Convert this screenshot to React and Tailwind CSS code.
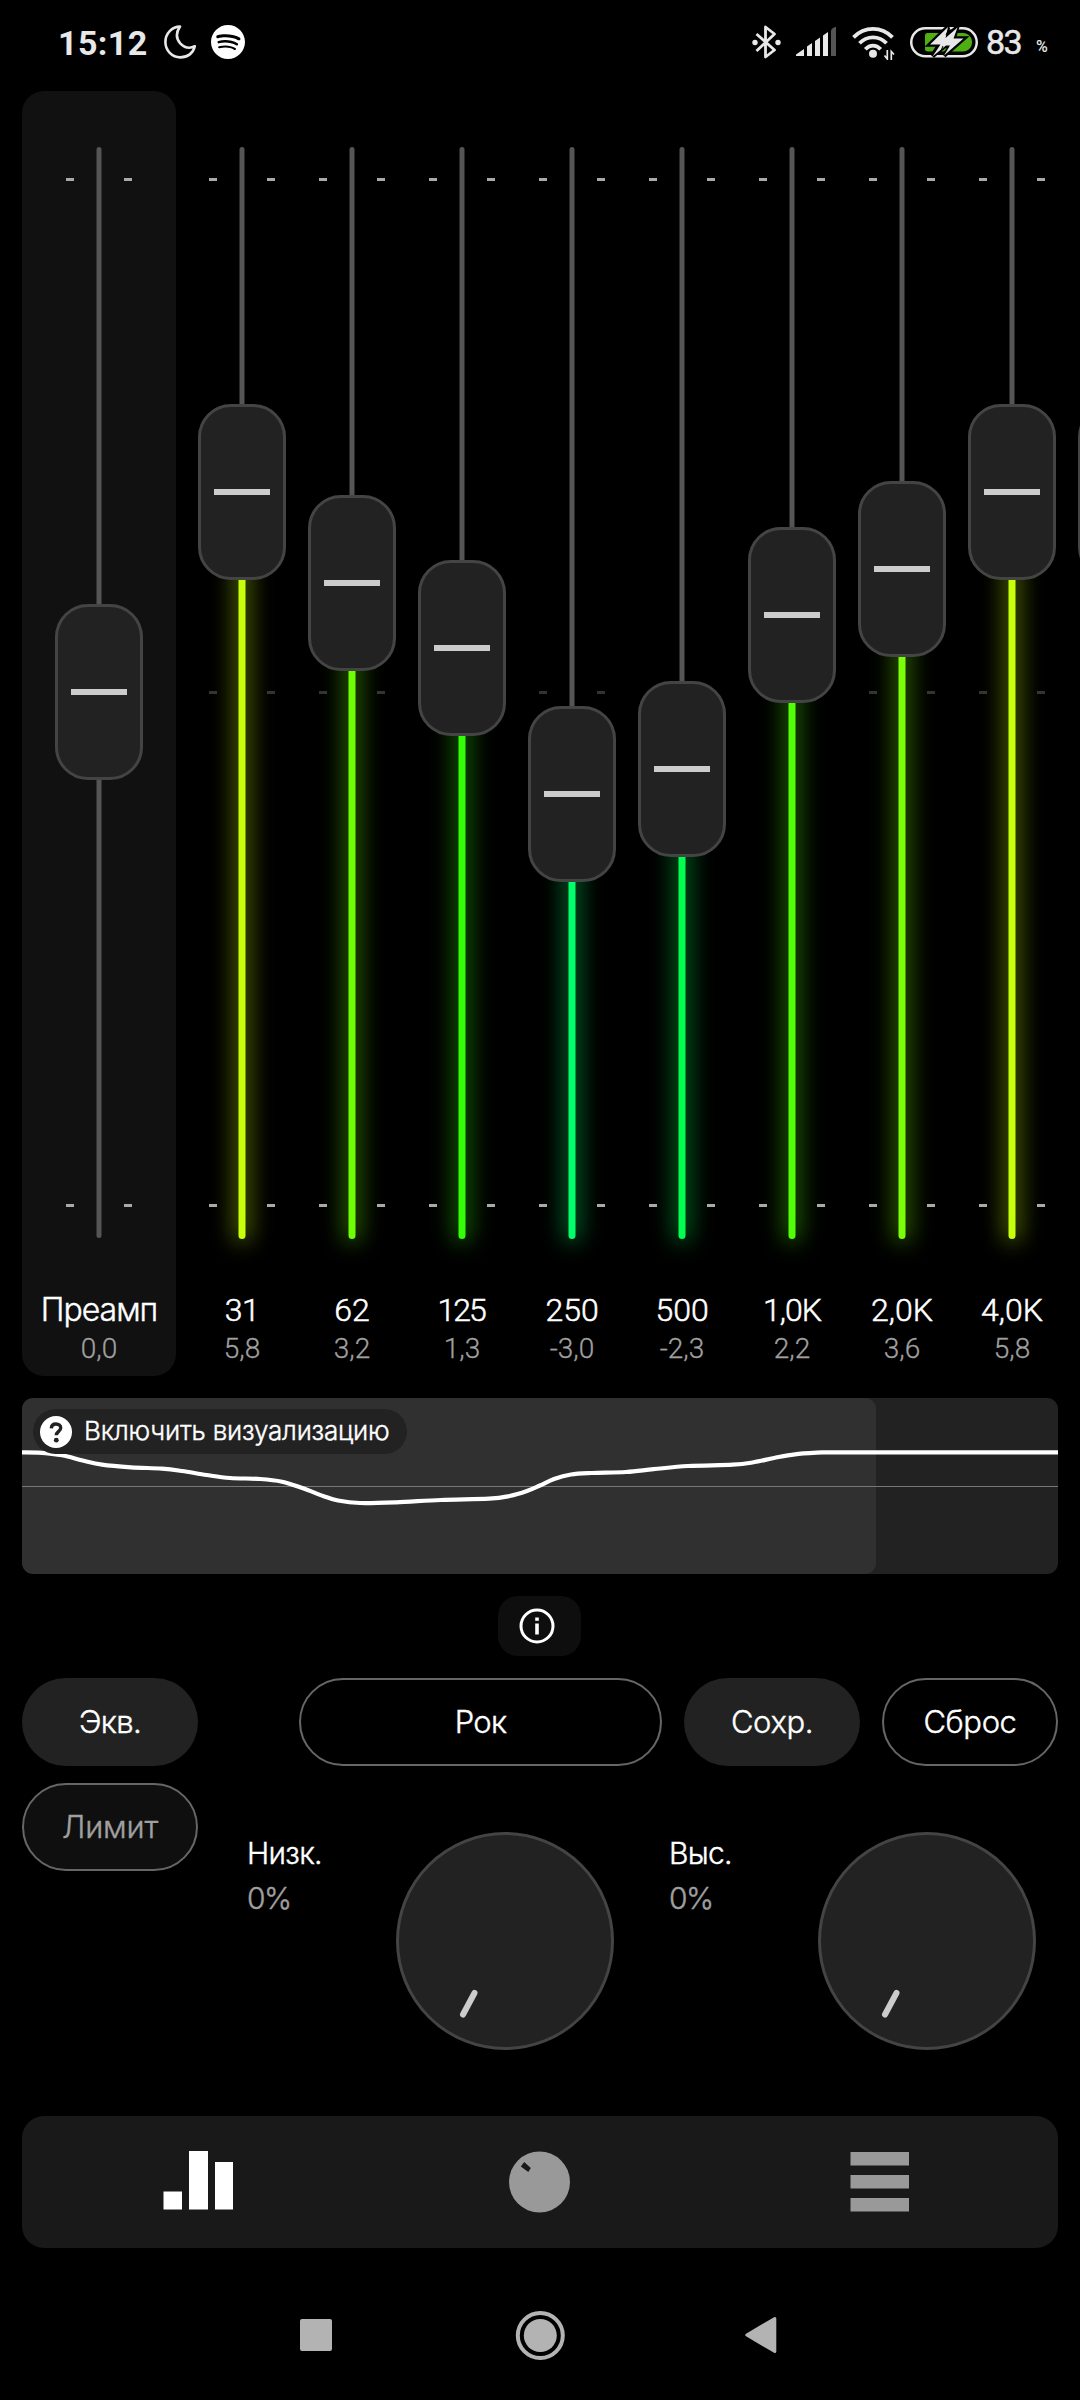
import React from 'react';
import { SiSpotify } from 'react-icons/si';

const bands = [
    { label: '31', value: '5,8', top: 257, color: '#c8ff0a', track: 'tracking-[-0.5px]' },
    { label: '62', value: '3,2', top: 348, color: '#6eff05', track: 'tracking-normal' },
    { label: '125', value: '1,3', top: 413, color: '#32ff08', track: 'tracking-[-2px] pr-0.5' },
    { label: '250', value: '-3,0', top: 559, color: '#00ff6a', track: 'tracking-normal' },
    { label: '500', value: '-2,3', top: 534, color: '#00ff50', track: 'tracking-normal' },
    { label: '1,0K', value: '2,2', top: 380, color: '#50ff08', track: 'tracking-[-1px]' },
    { label: '2,0K', value: '3,6', top: 334, color: '#7aff08', track: 'tracking-normal' },
    { label: '4,0K', value: '5,8', top: 257, color: '#c8ff0a', track: 'tracking-normal' },
    // next band only peeks in from the right edge
    { label: '', value: '', top: 257, color: '#c8ff0a', track: 'tracking-normal' },
];

const curvePoints = [
    [0, 54.3], [16, 54.7], [40, 57.3], [60.6, 62.5], [80, 66.7], [109, 69.3], [140, 70.7], [160, 73],
    [184.6, 77], [208, 80], [238, 81], [260, 83.7], [281, 90.3], [301.7, 98.2], [316, 102.5], [338, 105],
    [374, 104.3], [418.8, 102], [467, 100.7], [487.6, 98], [505, 93], [518, 87.5], [532, 81], [549, 76.5],
    [569.7, 75], [604, 74], [631.6, 71.2], [666, 68], [710.8, 66.7], [731.5, 64.3], [752, 60], [773, 56.3],
    [800, 54.4], [1036, 54.3],
];

// Catmull-Rom through the response points
const buildCurve = (pts) => {
    let d = `M${pts[0][0]} ${pts[0][1]}`;
    for (let i = 0; i < pts.length - 1; i++) {
        if (i === pts.length - 2) {
            d += ` L${pts[i + 1][0]} ${pts[i + 1][1]}`;
            continue;
        }
        const a = pts[i - 1] || pts[i];
        const b = pts[i];
        const c = pts[i + 1];
        const e = i + 3 < pts.length ? pts[i + 2] : c;
        d += ` C${b[0] + (c[0] - a[0]) / 6} ${b[1] + (c[1] - a[1]) / 6} ${c[0] - (e[0] - b[0]) / 6} ${c[1] - (e[1] - b[1]) / 6} ${c[0]} ${c[1]}`;
    }
    return d;
};

const TickRow = ({ dim }) => (
    <div className="flex h-[3px] w-[66px] justify-between">
        <div className={dim ? 'w-2 bg-[#333]' : 'w-2 bg-[#aaa]'} />
        <div className={dim ? 'w-2 bg-[#333]' : 'w-2 bg-[#aaa]'} />
    </div>
);

const Slider = ({ top, color }) => (
    <div className="relative mt-14 flex h-[1092px] w-full shrink-0 justify-center">
        <div className="h-[1091px] w-[5px] -translate-x-[0.5px] rounded-full bg-[#555]" />
        <div className="absolute inset-x-0 top-[31px] flex h-[1029px] flex-col items-center justify-between">
            <TickRow />
            <TickRow dim />
            <TickRow />
        </div>
        {color && (
            <div
                className="absolute bottom-0 w-[7px] -translate-x-[0.5px] rounded-full"
                style={{ top: top + 150, background: color, boxShadow: `0 0 22px 4px ${color}70` }}
            />
        )}
        <div
            className="absolute flex h-44 w-22 items-center justify-center rounded-[33px] border-3 border-[#444] bg-[#222]"
            style={{ top }}
        >
            <div className="h-1.5 w-14 bg-[#ccc]" />
        </div>
    </div>
);

const StatusBar = () => (
    <header className="flex h-[91px] shrink-0 items-start pt-[25px] pl-[58px] text-[#e8e8e8]">
        <div className="mt-px w-[106px] text-[34px] leading-[34px] font-bold tracking-[0.4px] whitespace-nowrap">15:12</div>
        <svg className="h-[34px] w-8" viewBox="0 0 32 34" fill="none" stroke="currentColor" strokeWidth="2.6" strokeLinejoin="round">
            <path d="M16 1.600C8 1.600 1.400 8.500 1.400 17S8 32.400 16.300 32.400C23.500 32.400 29.500 28 30.800 21.200C25.500 24 20 22.200 16.200 18.300C12 13.500 12 7.500 16 1.600Z" />
        </svg>
        <SiSpotify className="ml-[15px] size-[34px] text-white" />
        <svg className="ml-[507px] h-[34px] w-[30px]" viewBox="0 0 30 34" fill="none" stroke="currentColor" strokeWidth="2.8" strokeLinejoin="round">
            <path d="M4.500 9L22.500 25L13.500 32V2L22.500 9L4.500 26" />
            <circle cx="3" cy="17.500" r="2.700" fill="currentColor" stroke="none" />
            <circle cx="26" cy="17.500" r="2.700" fill="currentColor" stroke="none" />
        </svg>
        <svg className="mt-0.5 ml-[14px] h-[30px] w-10" viewBox="0 0 40 30" fill="currentColor">
            <path d="M0 29V27.500L8 22V29Z" />
            <path d="M11 29V19.500L16 16V29Z" />
            <path d="M19 29V14L24 10.500V29Z" />
            <path d="M27 29V8.500L32 5V29Z" />
            <path d="M35 29V4C35 2 38 0 40 0V29Z" fill="#555" />
        </svg>
        <svg className="ml-4 h-[35px] w-[43px]" viewBox="0 0 43 35" fill="none" stroke="currentColor" strokeWidth="3.800">
            <path d="M1.500 12.300C12.500 1 29.500 1 40.500 12.300" />
            <path d="M7.500 18.300C15 10.300 27 10.300 34.500 18.300" />
            <path d="M13.300 24.300C18 19.300 24 19.300 28.700 24.300" />
            <circle cx="21" cy="28.700" r="4" fill="currentColor" stroke="none" />
            <path d="M35.300 25V34L32.500 30.500M39.300 35V26.500L42 29.500" strokeWidth="1.700" />
        </svg>
        <svg className="mt-0.5 ml-[15px] h-8 w-[69px]" viewBox="0 0 69 32" fill="none">
            <rect x="1.250" y="1.250" width="65.500" height="28" rx="14" stroke="currentColor" strokeWidth="2.500" />
            <path d="M15 8.500C15 7 16 6 17.500 6H53C58 6 62 10 62 15.200S58 24.500 53 24.500H18C16 24.500 15 23.500 15 22Z" fill="#4fae12" />
            <path d="M38 0L20 17.500H29.500L22.500 29L34.500 19H41L34 28.500L53.500 11.500H43.500L47 0.500L37 9.500H34Z" fill="#000" stroke="#000" strokeWidth="4.500" />
            <path d="M38 0L20 17.500H30.500L22.500 29.500L36 18.500H40L34 28.500L53.500 11.500H43.500L47.500 0.500L35.500 11Z" fill="currentColor" />
            <path d="M39.500 1L36 8M33 19L30 26" stroke="#000" strokeWidth="1" />
        </svg>
        <div className="ml-[7px] w-[50px] text-[34px] leading-[34px] font-normal tracking-[-1.5px] whitespace-nowrap [-webkit-text-stroke:0.5px]">83</div>
        <div className="mt-[13px] text-[16px] leading-[17px] font-medium">%</div>
    </header>
);

const Equalizer = () => (
    <section className="flex h-[1285px] w-full shrink-0 overflow-hidden pl-[22px] font-light">
        <div className="mr-[11px] flex w-[154px] shrink-0 flex-col items-center rounded-[22px] bg-[#111]">
            <Slider top={457} />
            <div className="mt-[51px] font-[Inter] text-[32px] leading-[40px] tracking-[-1px] text-white [-webkit-text-stroke:0.4px]">Преамп</div>
            <div className="text-[28px] leading-[37px] text-[#a0a0a0] [-webkit-text-stroke:0.3px]">0,0</div>
        </div>
        {bands.map((band, i) => (
            <div key={i} className="flex w-[110px] shrink-0 flex-col items-center">
                <Slider top={band.top} color={band.color} />
                <div className={`mt-[51px] h-10 text-[32px] leading-[40px] text-white [-webkit-text-stroke:0.5px] ${band.track}`}>{band.label}</div>
                <div className="text-[28px] leading-[37px] text-[#a0a0a0] [-webkit-text-stroke:0.3px]">{band.value}</div>
            </div>
        ))}
    </section>
);

const Visualizer = () => (
    <section className="relative mx-[22px] mt-[22px] h-44 shrink-0 overflow-hidden rounded-[11px] bg-[#222]">
        <div className="h-full w-[854px] rounded-[11px] bg-[#303030]" />
        <svg className="absolute inset-0 h-full w-full" viewBox="0 0 1036 176" fill="none">
            <path d="M0 88.500H1036" stroke="#777" />
            <path d={buildCurve(curvePoints)} stroke="#fff" strokeWidth="4.200" />
        </svg>
        <div className="absolute top-[11px] left-[11px] flex h-[45px] w-[374px] items-center rounded-full bg-[#222] pl-[7px]">
            <svg className="mr-[12px] size-8 shrink-0" viewBox="0 0 32 32" fill="none">
                <circle cx="16" cy="16" r="16" fill="#fff" />
                <path d="M11.300 12.300C11.500 9.500 13.500 8 16 8C18.700 8 20.700 9.700 20.700 12C20.700 15.300 16.300 15.500 16.300 19.300" stroke="#222" strokeWidth="3.400" />
                <circle cx="16.300" cy="24.200" r="2.400" fill="#222" />
            </svg>
            <span className="pb-0.5 font-[Inter] text-[26px] leading-[32px] font-light tracking-[-0.2px] whitespace-nowrap text-white [-webkit-text-stroke:0.4px]">Включить визуализацию</span>
        </div>
    </section>
);

const Knob = ({ label, value }) => (
    <div className="flex w-[367px] justify-between">
        <div className="font-[Inter] text-[30px]">
            <div className="leading-[43px] tracking-[-0.7px] text-white">{label}</div>
            <div className="leading-[47px] tracking-[-1.5px] text-[#a0a0a0]">{value}</div>
        </div>
        <svg className="size-[218px]" viewBox="0 0 218 218">
            <circle cx="109" cy="109" r="107.500" fill="#222" stroke="#444" strokeWidth="3" />
            <path d="M78.500 161L67 182.500" stroke="#ccc" strokeWidth="6" strokeLinecap="round" />
        </svg>
    </div>
);

const Controls = () => (
    <section className="mt-[22px] flex shrink-0 flex-col px-[22px] font-[Inter] text-[31px] font-light text-white [-webkit-text-stroke:0.4px]">
        <div className="flex h-22">
            <button className="w-44 rounded-full bg-[#222] tracking-[-0.7px]">Экв.</button>
            <button className="ml-[101px] w-[363px] rounded-full border-2 border-[#666] tracking-[-0.7px]">Рок</button>
            <button className="ml-[22px] w-44 rounded-full bg-[#222] tracking-[-0.4px]">Сохр.</button>
            <button className="ml-[22px] w-44 rounded-full border-2 border-[#666] tracking-[-0.4px]">Сброс</button>
        </div>
        <div className="mt-[17px] flex h-[267px]">
            <button className="h-22 w-44 rounded-full border-2 border-[#666] bg-[#0f0f0f] tracking-[-0.2px] text-[#a0a0a0]">Лимит</button>
            <div className="mt-[49px] ml-[49px] flex gap-[55px]">
                <Knob label="Низк." value="0%" />
                <Knob label="Выс." value="0%" />
            </div>
        </div>
    </section>
);

const NavBar = () => (
    <nav className="mx-[22px] mt-[66px] flex h-[132px] shrink-0 items-start rounded-[22px] bg-[#191919] pt-[35px]">
        <svg className="ml-[141px] h-[60px] w-[70px]" viewBox="0 0 70 60" fill="#fff">
            <path d="M0.500 40.500H19V58.500H0.500ZM26 0H45V58.500H26ZM52 11H70V58.500H52Z" />
        </svg>
        <svg className="ml-[276px] size-[62px]" viewBox="0 0 62 62">
            <circle cx="30.500" cy="31" r="30.500" fill="#999" />
            <path d="M15.200 11L21.800 17L19.300 21L11.800 15.500Z" fill="#191919" />
        </svg>
        <svg className="ml-[279px] h-[62px] w-[60px]" viewBox="0 0 60 62" fill="#999">
            <path d="M0.500 1H59V14.500H0.500ZM0.500 24H59V37.500H0.500ZM0.500 47H59V60.500H0.500Z" />
        </svg>
    </nav>
);

const SystemNav = () => (
    <footer className="mt-[62px] flex h-[50px] shrink-0 items-center pl-[300px]">
        <div className="size-8 rounded-[2px] bg-[#b3b3b3]" />
        <svg className="ml-[183px] size-[50px]" viewBox="0 0 50 50">
            <circle cx="25.300" cy="25.500" r="22.500" fill="none" stroke="#b3b3b3" strokeWidth="4" />
            <circle cx="25.300" cy="25.500" r="16.500" fill="#b3b3b3" />
        </svg>
        <svg className="ml-[180px] h-[38px] w-8" viewBox="0 0 32 38" fill="#b3b3b3" stroke="#b3b3b3" strokeWidth="3" strokeLinejoin="round">
            <path d="M29.800 2.500V35.500L1.800 19Z" />
        </svg>
    </footer>
);

export default function App() {
    return (
        <div className="flex h-[2400px] w-[1080px] flex-col overflow-hidden bg-black font-[Roboto,sans-serif]">
            <StatusBar />
            <Equalizer />
            <Visualizer />
            <div className="mt-[22px] ml-[498px] flex h-[60px] w-[83px] shrink-0 items-center rounded-[20px] bg-[#0e0e0e] pl-[21px]">
                <svg className="size-[36px]" viewBox="0 0 36 36" fill="none" stroke="#fff" strokeWidth="3">
                    <circle cx="18" cy="18" r="16" />
                    <path d="M18 15.500V26.500" strokeWidth="3.600" />
                    <path d="M18 9.500V12.800" strokeWidth="3.600" />
                </svg>
            </div>
            <Controls />
            <NavBar />
            <SystemNav />
        </div>
    );
}
